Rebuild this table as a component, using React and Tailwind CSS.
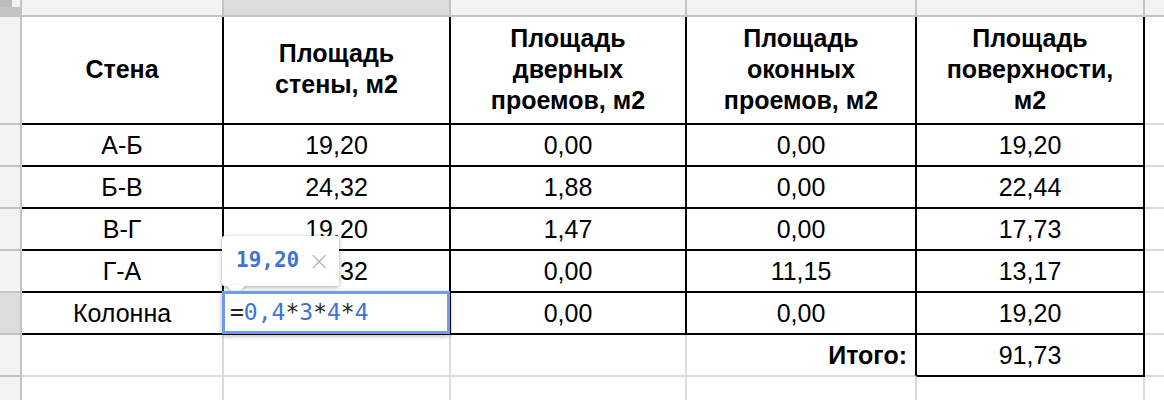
const cols = [
  { w: 'w-[202px]' },
  { w: 'w-[227px]' },
  { w: 'w-[236px]' },
  { w: 'w-[230px]' },
  { w: 'w-[228px]' },
]

const rows = [
  ['А-Б', '19,20', '0,00', '0,00', '19,20'],
  ['Б-В', '24,32', '1,88', '0,00', '22,44'],
  ['В-Г', '19,20', '1,47', '0,00', '17,73'],
  ['Г-А', '24,32', '0,00', '11,15', '13,17'],
  ['Колонна', '', '0,00', '0,00', '19,20'],
]

const headers = [
  ['Стена'],
  ['Площадь', 'стены, м2'],
  ['Площадь', 'дверных', 'проемов, м2'],
  ['Площадь', 'оконных', 'проемов, м2'],
  ['Площадь', 'поверхности,', 'м2'],
]

function Gutter({ h, active }) {
  return (
    <div
      className={`w-[22px] shrink-0 border-r-2 border-b-2 border-[#c4c4c4] ${h} ${
        active ? 'bg-[#dcdcdc]' : 'bg-[#f3f3f3]'
      }`}
    />
  )
}

function Cell({ w, h, black, children, bold, right }) {
  return (
    <div
      className={`${w} ${h} shrink-0 border-r-2 border-b-2 flex items-center ${
        right ? 'justify-end pr-[8px]' : 'justify-center'
      } ${black ? 'border-black' : 'border-[#dadada]'} ${bold ? 'font-bold' : ''}`}
    >
      {children}
    </div>
  )
}

function Editor() {
  return (
    <>
      {/* formula preview tooltip */}
      <div className="absolute left-[-2px] top-[-57px] w-[117px] h-[50px] bg-white rounded-[2px] shadow-[0_1px_4px_rgba(0,0,0,0.35)] flex items-center pl-[14px] z-10">
        <span className="font-['DejaVu_Sans_Mono',monospace] font-bold text-[21px] text-[#3f72d8]">19,20</span>
        <span className="ml-[9px] text-[#b5b5b5] text-[26px] leading-none font-['DejaVu_Sans',sans-serif] font-light">×</span>
        <div className="absolute left-[4px] bottom-[-10px] w-0 h-0 border-l-[10px] border-r-[10px] border-t-[11px] border-l-transparent border-r-transparent border-t-white drop-shadow-[0_1px_1px_rgba(0,0,0,0.25)]" />
      </div>
      {/* cell editor */}
      <div className="absolute left-[-2px] top-[-2px] w-[228px] h-[43px] bg-white border-[3px] border-[#6d9cee] shadow-[0_2px_5px_rgba(0,0,0,0.3)] flex items-center pl-[5px] z-10 font-['DejaVu_Sans_Mono',monospace] text-[23px]">
        <span className="text-[#222]">=</span>
        <span className="text-[#3f72d8]">0,4</span>
        <span className="text-[#222]">*</span>
        <span className="text-[#3f72d8]">3</span>
        <span className="text-[#222]">*</span>
        <span className="text-[#3f72d8]">4</span>
        <span className="text-[#222]">*</span>
        <span className="text-[#3f72d8]">4</span>
      </div>
    </>
  )
}

export default function App() {
  return (
    <div className="w-[1164px] h-[400px] overflow-hidden bg-white text-[25px] text-black font-['Liberation_Sans',Arial,sans-serif]">
      {/* column header bar */}
      <div className="flex h-[17px]">
        <div className="w-[22px] shrink-0 h-[17px] bg-[#c4c4c4] flex flex-col">
          <div className="flex h-[7px]">
            <div className="w-[12px] bg-[#bdbdbd]" />
            <div className="w-[8px] bg-[#f3f3f3]" />
          </div>
        </div>
        {cols.map((c, i) => (
          <div
            key={i}
            className={`${c.w} shrink-0 h-[17px] border-r-2 border-b-2 border-[#c4c4c4] ${
              i === 1 ? 'bg-[#dcdcdc]' : 'bg-[#f3f3f3]'
            }`}
          />
        ))}
        <div className="flex-1 h-[17px] border-b-2 border-[#c4c4c4] bg-[#f3f3f3]" />
      </div>

      {/* table header row */}
      <div className="flex">
        <Gutter h="h-[108px]" />
        {headers.map((lines, i) => (
          <Cell key={i} w={cols[i].w} h="h-[108px]" black bold>
            <div className="text-center leading-[31px] pb-[2px]">
              {lines.map((l) => (
                <div key={l}>{l}</div>
              ))}
            </div>
          </Cell>
        ))}
        <div className="flex-1 h-[108px] border-b-2 border-[#dadada]" />
      </div>

      {/* data rows */}
      {rows.map((r, ri) => (
        <div key={ri} className="flex">
          <Gutter h="h-[42px]" active={ri === 4} />
          {r.map((v, ci) => (
            <div key={ci} className="relative">
              <Cell w={cols[ci].w} h="h-[42px]" black>
                <span className="pt-[2px]">{v}</span>
              </Cell>
              {ri === 4 && ci === 1 && <Editor />}
            </div>
          ))}
          <div className="flex-1 h-[42px] border-b-2 border-[#dadada]" />
        </div>
      ))}

      {/* total row */}
      <div className="flex">
        <Gutter h="h-[42px]" />
        <Cell w={cols[0].w} h="h-[42px]" />
        <Cell w={cols[1].w} h="h-[42px]" />
        <Cell w={cols[2].w} h="h-[42px]" />
        <div className="w-[230px] h-[42px] shrink-0 border-r-2 border-b-2 border-r-black border-b-[#dadada] flex items-center justify-end pr-[8px] font-bold">
          <span className="pt-[2px]">Итого:</span>
        </div>
        <Cell w={cols[4].w} h="h-[42px]" black>
          <span className="pt-[2px]">91,73</span>
        </Cell>
        <div className="flex-1 h-[42px] border-b-2 border-[#dadada]" />
      </div>

      {/* empty row */}
      <div className="flex">
        <Gutter h="h-[42px]" />
        {cols.map((c, i) => (
          <Cell key={i} w={c.w} h="h-[42px]" />
        ))}
        <div className="flex-1 h-[42px] border-b-2 border-[#dadada]" />
      </div>
    </div>
  )
}
